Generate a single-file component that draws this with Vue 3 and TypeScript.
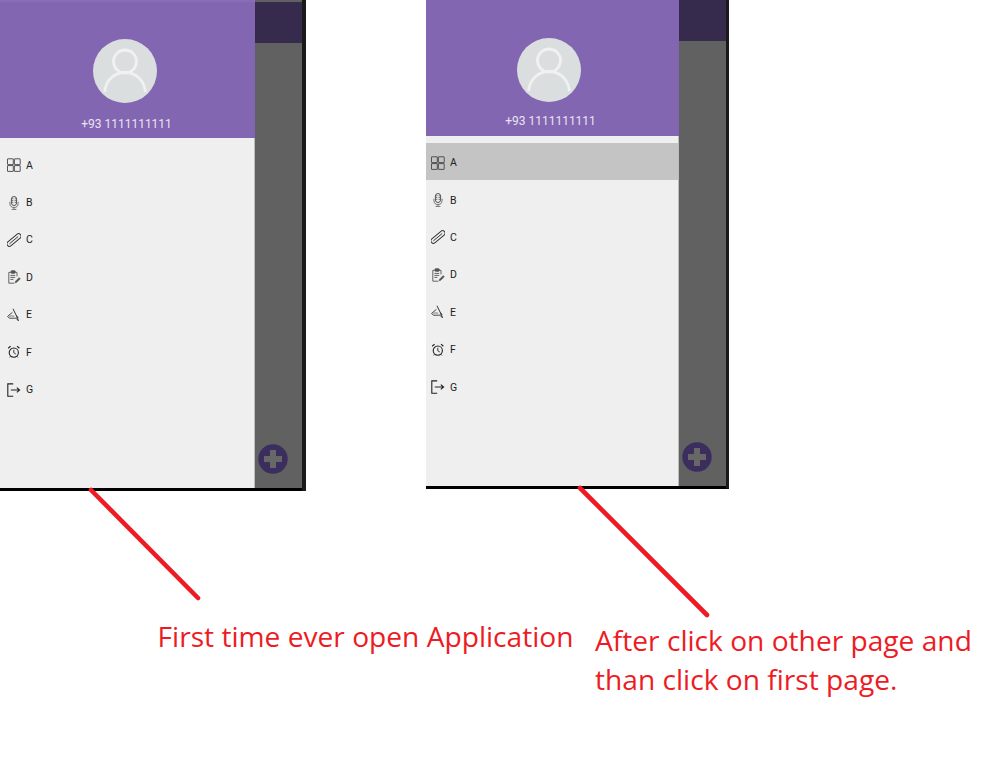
<script setup lang="ts">
interface Item { label: string; icon: string }
const items: Item[] = [
  { label: 'A', icon: 'grid' },
  { label: 'B', icon: 'mic' },
  { label: 'C', icon: 'clip' },
  { label: 'D', icon: 'note' },
  { label: 'E', icon: 'pen' },
  { label: 'F', icon: 'clock' },
  { label: 'G', icon: 'exit' },
]
const screens = [
  { id: 'first', selected: '' },
  { id: 'second', selected: 'A' },
]
</script>

<template>
  <div class="canvas">
    <div class="screens">
      <section v-for="s in screens" :key="s.id" class="phone" :class="s.id">
        <div class="drawer">
          <header class="head">
            <div class="avatar">
              <svg viewBox="0 0 64 64" width="64" height="64" fill="none" stroke="#f0f1f1" stroke-width="2.8">
                <circle cx="32" cy="22.5" r="11.5" />
                <path d="M11.5 53 C13 41 21 33.5 32 33.5 C43 33.5 51 41 52.5 53" />
              </svg>
            </div>
            <div class="phone-no">+93 1111111111</div>
          </header>
          <ul class="menu">
            <li v-for="it in items" :key="it.label" class="row" :class="{ sel: it.label === s.selected }">
              <svg class="ic" viewBox="0 0 14 14" width="14" height="14" fill="none" stroke="#333" stroke-width="0.9">
                <g v-if="it.icon === 'grid'" stroke="#444">
                  <rect x="0.5" y="0.8" width="5.8" height="5.8" rx="0.3" />
                  <rect x="7.4" y="0.8" width="5.8" height="5.8" rx="0.3" />
                  <rect x="0.5" y="7.6" width="5.8" height="5.8" rx="0.3" />
                  <rect x="7.4" y="7.6" width="5.8" height="5.8" rx="0.3" />
                </g>
                <g v-else-if="it.icon === 'mic'" stroke="#444">
                  <rect x="4.4" y="0.5" width="5.2" height="9" rx="2.6" />
                  <path d="M4.6 2.8h1.8M4.6 4.6h1.8M4.6 6.4h1.8M7.6 2.8h1.8M7.6 4.6h1.8M7.6 6.4h1.8" stroke-width="0.7" />
                  <path d="M2.9 5.8v1.6a4.1 4.1 0 0 0 8.2 0V5.8M7 11.5v1.6M4.6 13.4h4.8" stroke="#666" />
                </g>
                <g v-else-if="it.icon === 'clip'" transform="rotate(-40 7 7)">
                  <rect x="-1.4" y="4.5" width="16.8" height="5" rx="2.5" stroke-width="1" />
                  <path d="M1 7h11.5" stroke-width="0.9" />
                </g>
                <g v-else-if="it.icon === 'note'" stroke="#555">
                  <path d="M10 6.4V2.4H8.4M3.8 2.4H1.8v10.8h5.6" />
                  <rect x="4" y="0.8" width="4.2" height="2.4" rx="0.5" fill="#555" />
                  <path d="M3.4 5.4h4.8M3.4 7.4h4.8M3.4 9.4h3" />
                  <path d="M8 12.8l.4-1.6 3.8-3.6 1.2 1.2-3.8 3.6z" fill="#555" stroke-width="0.4" />
                </g>
                <g v-else-if="it.icon === 'pen'" stroke="#333">
                  <path d="M6 0.8 10.6 10.2l.8 2.6-1.8-2" stroke-width="1" />
                  <path d="M5.4 4.4.6 8.4l1.8 1.8h5.4c1.4 0 3-.2 3.4-.8L9 7.6" />
                  <path d="M2.2 8.2c1.6-.4 3.4-.4 5 0" stroke-width="0.6" />
                </g>
                <g v-else-if="it.icon === 'clock'" stroke="#222">
                  <circle cx="6.8" cy="7.6" r="4.6" stroke-width="1.1" />
                  <path d="M6.8 4.8v3l2 1.2" />
                  <path d="M1.2 3.2 3.6 1.1M12.4 3.2 10 1.1" stroke-width="1.2" />
                  <path d="M3.4 11.4l-.7 1M10.2 11.4l.7 1" stroke-width="0.9" />
                </g>
                <g v-else stroke="#222">
                  <path d="M6.2 0.9H.8v12.4h5.4" stroke-width="1.1" />
                  <path d="M3.8 7h8.6M9.8 4.6 12.6 7l-2.8 2.4" stroke-width="1.1" />
                </g>
              </svg>
              <span class="lbl">{{ it.label }}</span>
            </li>
          </ul>
        </div>
        <aside class="scrim">
          <div class="scrim-top"></div>
          <div class="fab">
            <svg viewBox="0 0 30 30" width="30" height="30">
              <circle cx="15" cy="15" r="14.7" fill="#3c2d5f" />
              <path d="M15 6v18M6 15h18" stroke="#676767" stroke-width="6" />
            </svg>
          </div>
        </aside>
      </section>
    </div>

    <svg class="arrows" viewBox="0 0 1002 780" width="1002" height="780">
      <path d="M91 490 198 598M580 488 707 615" stroke="#ed1c24" stroke-width="4.6" stroke-linecap="round" />
    </svg>
    <p class="note note-a">First time ever open Application</p>
    <p class="note note-b">After click on other page and<br />than click on first page.</p>
  </div>
</template>

<style scoped>
.canvas {
  position: relative;
  width: 1002px;
  height: 780px;
  background: #fff;
  overflow: hidden;
  font-family: Roboto, "Liberation Sans", sans-serif;
}
.screens {
  display: flex;
  align-items: flex-start;
  gap: 120px;
}
.phone {
  display: flex;
  box-sizing: border-box;
  flex: none;
}
.first {
  width: 306px;
  height: 491px;
  background: #000;
  border-right: 4px solid #1a1a1a;
  padding-bottom: 3px;
}
.second {
  width: 303px;
  height: 489px;
  border-right: 3px solid #1a1a1a;
  padding-bottom: 2px;
  border-bottom: 1px solid #000;
  background: #000;
}
.drawer {
  flex: 1;
  display: flex;
  flex-direction: column;
  background: #efefef;
}
.head {
  box-sizing: border-box;
  background: #8366b1;
  display: flex;
  flex-direction: column;
  align-items: center;
  padding-right: 5px;
  flex: none;
}
.first .head {
  height: 138px;
  padding-top: 37px;
  border-top: 2px solid #8a6cb8;
}
.second .head {
  height: 136px;
  padding-top: 37.5px;
  padding-right: 7px;
}
.avatar {
  width: 64px;
  height: 64px;
  border-radius: 50%;
  background: #dbdedf;
}
.avatar svg {
  display: block;
}
.phone-no {
  margin-top: 11px;
  margin-left: 3px;
  font-size: 12px;
  line-height: 16px;
  color: #e9e3f2;
}
.first .phone-no {
  margin-top: 12.5px;
}
.menu {
  flex: 1;
  list-style: none;
  margin: 0;
  padding: 8px 0 0;
  border-right: 1px solid #bdbdbd;
}
.second .menu {
  padding-top: 7px;
}
.row {
  box-sizing: border-box;
  height: 37.4px;
  display: flex;
  align-items: center;
  gap: 5px;
  padding-left: 7px;
  padding-top: 1px;
}
.second .row {
  padding-left: 5px;
  padding-top: 2px;
}
.row.sel {
  background: #c4c4c4;
}
.ic {
  flex: none;
}
.lbl {
  font-size: 10.5px;
  color: #222;
}
.scrim {
  width: 47px;
  flex: none;
  display: flex;
  flex-direction: column;
  background: #616161;
}
.scrim-top {
  height: 41px;
  background: #372b4d;
}
.first .scrim-top {
  margin-top: 2px;
}
.fab {
  margin-top: auto;
  margin-bottom: 14px;
  margin-left: 3px;
  height: 30px;
}
.fab svg {
  display: block;
}
.arrows {
  position: absolute;
  left: 0;
  top: 0;
  pointer-events: none;
}
.note {
  position: absolute;
  margin: 0;
  color: #ed1c24;
  font-family: "Open Sans", sans-serif;
  font-size: 28.15px;
  line-height: 39px;
  white-space: nowrap;
}
.note-a {
  left: 157.5px;
  top: 617px;
}
.note-b {
  left: 595px;
  top: 621px;
}
</style>
